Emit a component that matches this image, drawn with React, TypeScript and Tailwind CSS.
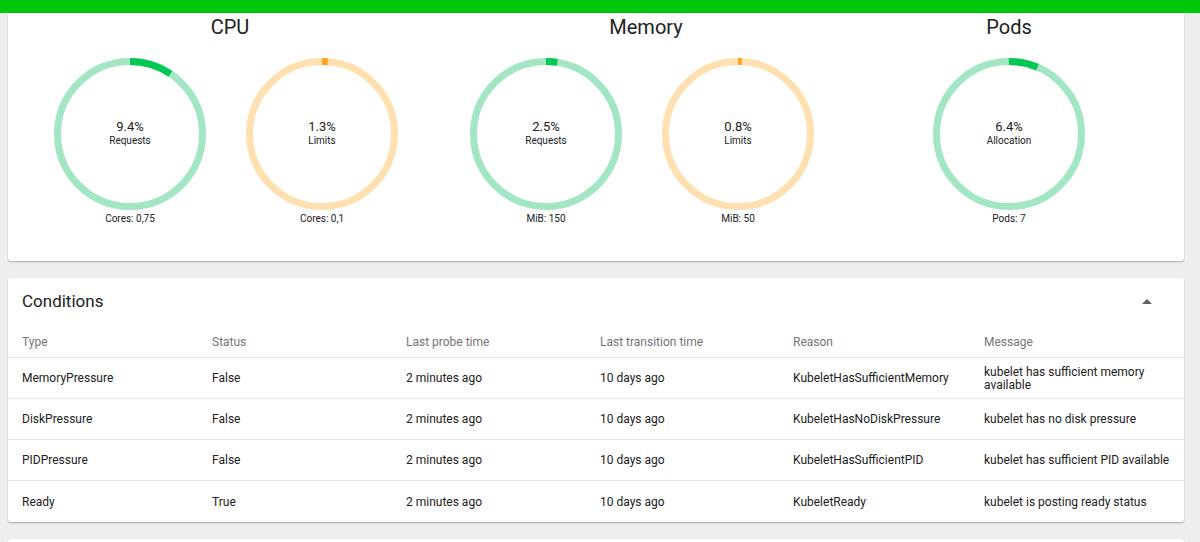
import React from "react";

type Chart = { pct: number; label: string; foot: string; kind: "green" | "orange" };

const R = 72.5;
const C = 2 * Math.PI * R;

function Ring({ pct, label, foot, kind }: Chart) {
  const track = kind === "green" ? "#a3e6c4" : "#ffe0b0";
  const bar = kind === "green" ? "#00c853" : "#ffa31a";
  const len = (pct / 100) * C;
  return (
    <div className="flex w-[192px] flex-col items-center">
      <div className="relative h-[152px] w-[152px]">
        <svg width="152" height="152" viewBox="0 0 152 152" className="absolute inset-0">
          <circle cx="76" cy="76" r={R} fill="none" stroke={track} strokeWidth="7" />
          <circle
            cx="76"
            cy="76"
            r={R}
            fill="none"
            stroke={bar}
            strokeWidth="7"
            strokeDasharray={`${len} ${C}`}
            transform="rotate(-90 76 76)"
          />
        </svg>
        <div className="absolute inset-0 flex flex-col items-center justify-center pb-px">
          <div className="text-[13px] leading-[14px] text-[#212121]">{pct}%</div>
          <div className="text-[10px] leading-[13px] text-[#212121]">{label}</div>
        </div>
      </div>
      <div className="mt-[3px] text-[10px] leading-[12px] text-[#212121]">{foot}</div>
    </div>
  );
}

function Group({ title, charts, width, titleClass }: { title: string; charts: Chart[]; width: string; titleClass: string }) {
  return (
    <div className={`flex flex-col items-center ${width}`}>
      <div className={`mt-[2px] text-[20px] leading-[24px] text-[#212121] ${titleClass}`}>{title}</div>
      <div className="mt-[19px] flex">
        {charts.map((c, i) => (
          <Ring key={i} {...c} />
        ))}
      </div>
    </div>
  );
}

const rows = [
  ["MemoryPressure", "False", "2 minutes ago", "10 days ago", "KubeletHasSufficientMemory", "kubelet has sufficient memory available"],
  ["DiskPressure", "False", "2 minutes ago", "10 days ago", "KubeletHasNoDiskPressure", "kubelet has no disk pressure"],
  ["PIDPressure", "False", "2 minutes ago", "10 days ago", "KubeletHasSufficientPID", "kubelet has sufficient PID available"],
  ["Ready", "True", "2 minutes ago", "10 days ago", "KubeletReady", "kubelet is posting ready status"],
];

const headers = ["Type", "Status", "Last probe time", "Last transition time", "Reason", "Message"];
const cols = "grid grid-cols-[190px_194px_194px_193px_191px_1fr]";

export default function App() {
  return (
    <div
      className="h-[542px] w-[1200px] overflow-hidden bg-[#eceef0]"
      style={{ fontFamily: "Roboto, 'Noto Sans', sans-serif" }}
    >
      <div className="h-[13px] bg-[#00c808]" />
      <div className="flex flex-col gap-[17px] pl-2 pr-4">
        <div className="flex h-[248px] rounded-b-[3px] bg-white shadow-[0_1px_2px_rgba(0,0,0,0.22),0_1px_1px_rgba(0,0,0,0.1)]">
          <Group
            title="CPU"
            width="w-[436px]"
            titleClass="ml-[8px]"
            charts={[
              { pct: 9.4, label: "Requests", foot: "Cores: 0,75", kind: "green" },
              { pct: 1.3, label: "Limits", foot: "Cores: 0,1", kind: "orange" },
            ]}
          />
          <Group
            title="Memory"
            width="w-[396px]"
            titleClass="ml-[8px]"
            charts={[
              { pct: 2.5, label: "Requests", foot: "MiB: 150", kind: "green" },
              { pct: 0.8, label: "Limits", foot: "MiB: 50", kind: "orange" },
            ]}
          />
          <Group
            title="Pods"
            width="w-[338px]"
            titleClass=""
            charts={[{ pct: 6.4, label: "Allocation", foot: "Pods: 7", kind: "green" }]}
          />
        </div>

        <div className="rounded-[3px] bg-white shadow-[0_1px_2px_rgba(0,0,0,0.22),0_1px_1px_rgba(0,0,0,0.1)]">
          <div className="flex h-[46px] items-center justify-between pl-[14px] pr-[32px]">
            <div className="text-[17px] leading-[20px] text-[#212121]">Conditions</div>
            <svg width="10" height="5" viewBox="0 0 10 5">
              <path d="M0 5 L5 0 L10 5 Z" fill="#5f6368" />
            </svg>
          </div>
          <div className={`${cols} h-[34px] items-center border-b border-[#e4e6e8] text-[12px] text-[#757575]`}>
            {headers.map((h) => (
              <div key={h} className="pl-[14px] pt-[2px]">
                {h}
              </div>
            ))}
          </div>
          {rows.map((r, i) => (
            <div
              key={i}
              className={`${cols} h-[41px] items-center text-[12px] leading-[13px] text-[#212121] ${
                i < rows.length - 1 ? "border-b border-[#e4e6e8]" : ""
              }`}
            >
              {r.map((c, j) => (
                <div key={j} className={j === 5 ? "pl-[14px] pr-[14px] pt-px" : "pl-[14px] pt-px"}>
                  {c}
                </div>
              ))}
            </div>
          ))}
        </div>

        <div className="h-[40px] rounded-[3px] bg-white shadow-[0_1px_2px_rgba(0,0,0,0.22)]" />
      </div>
    </div>
  );
}
